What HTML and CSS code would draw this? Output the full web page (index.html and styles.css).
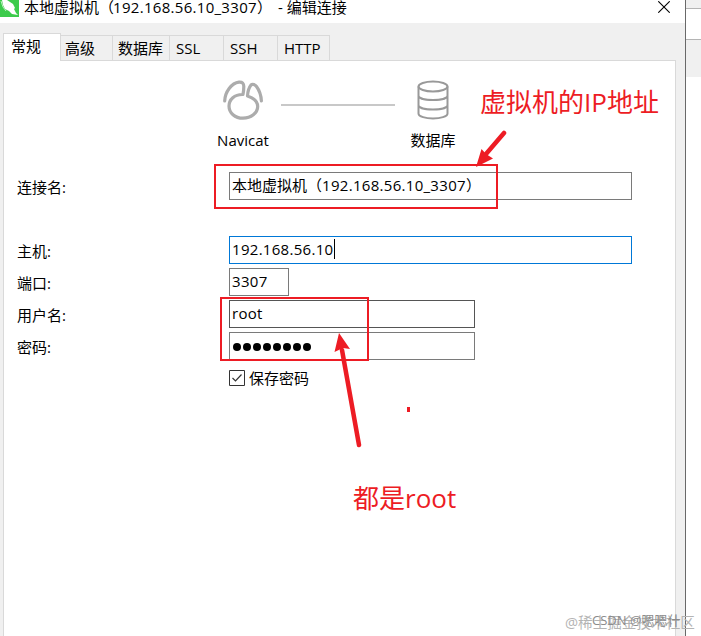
FILE: index.html
```html
<!DOCTYPE html>
<html lang="zh-CN">
<head>
<meta charset="utf-8">
<title>编辑连接</title>
<link rel="stylesheet" href="styles.css">
</head>
<body>
<div class="screen">
  <main class="dialog">
    <header class="titlebar">
      <svg class="app-icon" viewBox="0 0 19 17"><path d="M0 0h19v17H0z" fill="#3ccb4b"/><path d="M2 0h5l3 2 3 2 2 4-1 1 2 4 2 2-6-1-3-3-4-2-2-4z" fill="#fff"/><path d="M1 1l2 6 3 4" fill="none" stroke="#b8efbd"/></svg>
      <h1 class="title"><span>本地虚拟机（</span><span class="num">192.168.56.10_3307</span><span>）</span><span class="suffix">- 编辑连接</span></h1>
      <svg class="close" viewBox="0 0 12 12"><path d="M.3.3l11.4 11.4M11.7.3L.3 11.7" stroke="#000" stroke-width="1.1"/></svg>
    </header>
    <nav class="tabs">
      <span class="tab active">常规</span><span class="tab t-adv">高级</span><span class="tab t-db">数据库</span><span class="tab t-ssl">SSL</span><span class="tab t-ssh">SSH</span><span class="tab t-http">HTTP</span>
    </nav>
    <section class="panel">
      <div class="route">
        <div class="node">
          <svg class="node-icon" width="42" height="40" viewBox="0 0 42 40" fill="none" stroke="#acacac" stroke-width="3.2" stroke-linejoin="round" stroke-linecap="round"><path d="M2.700 21C3 12 9.500 3 17 2.200c3.500-.3 4.800 1.300 4.800 4.300 0 3-.3 5.500-.8 8-8.500-.3-14 5-14 11.500C7 33 13 38.200 21 38.200S35.700 33 35.700 26.500c0-4.500-4-8.500-10.200-10.500C25.700 12 27 7.500 29 5c1.500-1.500 4-.5 5.500 1.500 3 4 4.600 9 4.900 14.500"/></svg>
          <span>Navicat</span>
        </div>
        <div class="link"></div>
        <div class="node">
          <svg class="node-icon" width="32" height="40" viewBox="0 0 32 40" fill="none" stroke="#999" stroke-width="2"><ellipse cx="16" cy="6.500" rx="14.500" ry="5"/><path d="M1.500 6.500v27c0 6.500 29 6.500 29 0v-27M1.500 15.500c0 6 29 6 29 0M1.500 25c0 6 29 6 29 0"/></svg>
          <span>数据库</span>
        </div>
      </div>
      <div class="form">
        <div class="row name"><label>连接名:</label><div class="field"><span>本地虚拟机（</span><span class="num">192.168.56.10_3307</span><span>）</span></div></div>
        <div class="row"><label>主机:</label><div class="field focus"><span class="num">192.168.56.10</span><i class="caret"></i></div></div>
        <div class="row"><label>端口:</label><div class="field port"><span class="num">3307</span></div></div>
        <div class="row"><label>用户名:</label><div class="field mid hot"><span class="num">root</span></div></div>
        <div class="row"><label>密码:</label><div class="field mid"><span class="dots"><i></i><i></i><i></i><i></i><i></i><i></i><i></i><i></i></span></div></div>
        <div class="row check"><svg class="box" viewBox="0 0 16 16"><path d="M.5.5h15v15H.5z" fill="#fff" stroke="#333"/><path d="M3.500 8l3 3 6-6.500" fill="none" stroke="#333" stroke-width="1.200"/></svg><span>保存密码</span></div>
      </div>
    </section>
  </main>
  <aside class="behind"><div class="b1"></div><div class="b2"></div><div class="b3"></div></aside>
  <svg class="marks" viewBox="0 0 701 636"><g fill="none" stroke="#ed1c24" stroke-width="2"><path d="M215 165h282v43H215z"/><path d="M221 298h147v62H221z"/></g><g stroke="#ed1c24" stroke-width="4.500" stroke-linecap="round"><path d="M504 133l-18 21M359 445l-17-95"/></g><path d="M476 167l5.500-18 4.500 5 7 4.500zM339 333l11 16-7-1-8.500 4z" fill="#ed1c24"/><path d="M407 407h3v5h-3z" fill="#ed1c24"/></svg>
  <div class="note n1">虚拟机的IP地址</div>
  <div class="note n2">都是root</div>
  <div class="wm w1">@稀土掘金技术社区</div>
  <div class="wm w2">CSDN @嗯嗯什</div>
</div>
</body>
</html>
```
FILE: styles.css
```css
* { box-sizing: border-box; }
body { margin: 0; font: 15px/20px "Open Sans", "Noto Sans CJK SC", sans-serif; color: #000; }
.screen { position: relative; display: flex; width: 701px; height: 636px; overflow: hidden; background: #fff; }
.dialog { display: flex; flex-direction: column; width: 686px; border-right: 1px solid #696969; background: #f0f0f0; }
.titlebar { display: flex; align-items: flex-start; height: 23px; background: #fff; }
.app-icon { width: 19px; height: 17px; }
.title { display: flex; flex: 1; margin: -3px 0 0 5px; font-size: 15px; font-weight: 400; white-space: pre; }
.title .num { margin-left: -1px; }
.suffix { margin-left: 6px; }
.num { letter-spacing: .3px; }
.close { width: 12px; height: 12px; margin: 1px 15px 0 0; }
.tabs { z-index: 1; display: flex; align-items: flex-end; height: 38px; padding-left: 3px; }
.tab { height: 26px; padding: 2px 0 0 5px; border: 1px solid #d9d9d9; border-left: 0; white-space: nowrap; }
.tab.active { position: relative; width: 58px; height: 28px; padding: 2px 0 0 7px; border-left: 1px solid #d9d9d9; border-bottom: 0; background: #fff; }
.t-adv { width: 52px; padding-left: 4px; }
.t-db { width: 57px; padding-left: 5px; }
.t-ssl { width: 54px; padding-left: 6px; }
.t-ssh { width: 54px; padding-left: 6px; }
.t-http { width: 52px; padding-left: 6px; }
.panel { flex: 1; width: 673px; margin: -1px 0 0 3px; border: 1px solid #d9d9d9; border-bottom: 0; background: #fff; }
.route { display: flex; padding: 19px 0 0 206px; height: 111px; }
.node { display: flex; flex-direction: column; align-items: center; width: 66px; gap: 10px; }
.link { width: 114px; height: 2px; margin: 24px 5px 0; background: #c8c8c8; }
.form { display: flex; flex-direction: column; gap: 4px; padding-left: 13px; }
.row { display: flex; height: 28px; }
.row.name { margin-bottom: 32px; }
.row label { width: 212px; padding-top: 5px; }
.field { display: flex; width: 403px; height: 28px; padding: 2px; border: 1px solid #7a7a7a; white-space: pre; }
.focus { border-color: #0078d7; }
.port { width: 60px; }
.mid { width: 246px; }
.hot { border-color: #555; }
.caret { width: 1px; height: 20px; background: #000; }
.dots { display: flex; gap: 2px; padding: 8px 0 0 1px; }
.dots i { width: 8px; height: 8px; border-radius: 4px; background: #000; }
.check { padding-left: 212px; gap: 4px; }
.check span { padding-top: 4px; }
.box { width: 16px; height: 16px; margin-top: 6px; }
.behind { width: 15px; }
.b1 { height: 9px; background: #f0f0f0; border-bottom: 1px solid #b4b4b4; }
.b2 { height: 31px; border-bottom: 1px solid #b4b4b4; }
.b3 { height: 37px; background: #f0f0f0; }
.marks { position: absolute; inset: 0; width: 701px; height: 636px; }
.note { position: absolute; color: #ed1c24; font-size: 26px; line-height: 36px; white-space: nowrap; }
.n1 { left: 480px; top: 84px; }
.n2 { left: 353px; top: 480px; }
.wm { position: absolute; white-space: nowrap; }
.w1 { left: 565px; top: 612px; font-size: 14.6px; color: #b4b4b4; }
.w2 { left: 592px; top: 610px; font-size: 13px; color: #8c8c8c; }
```
